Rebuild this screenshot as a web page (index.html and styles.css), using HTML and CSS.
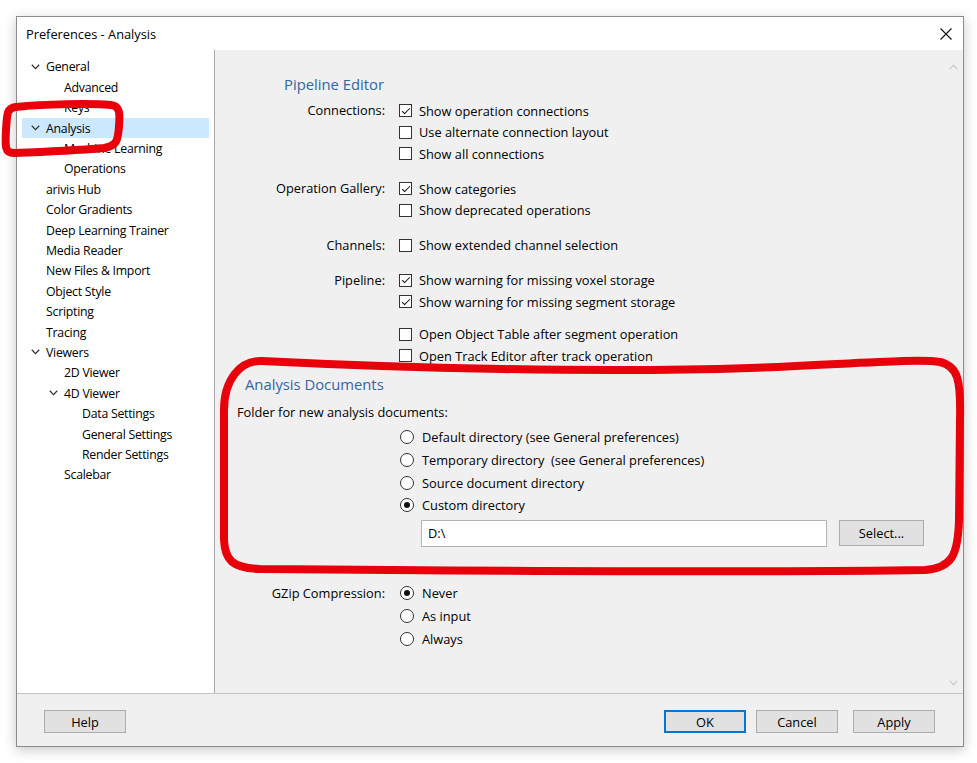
FILE: index.html
```html
<!DOCTYPE html>
<html>
<head>
  <meta name="viewport" content="width=device-width, initial-scale=1">
  <link rel="stylesheet" href="styles.css">
</head>
<body>

  <div class="window">
    <!-- Title bar -->
    <div class="titlebar">
      <span class="title">Preferences - Analysis</span>
      <span class="close">
        <svg width="12" height="12" viewBox="0 0 12 12"><path d="M0.5 0.5 L11.5 11.5 M11.5 0.5 L0.5 11.5" stroke="#111" stroke-width="1.1" fill="none"/></svg>
      </span>
    </div>

    <div class="main">
      <!-- Category tree -->
      <ul class="tree">
        <li class="l0"><span class="twisty"><svg width="9" height="6" viewBox="0 0 9 6"><path d="M0.8 0.8 L4.5 4.6 L8.2 0.8" stroke="#333" stroke-width="1.3" fill="none"/></svg></span>General</li>
        <li class="l1"><span class="twisty"></span>Advanced</li>
        <li class="l1"><span class="twisty"></span>Keys</li>
        <li class="l0 selected"><span class="twisty"><svg width="9" height="6" viewBox="0 0 9 6"><path d="M0.8 0.8 L4.5 4.6 L8.2 0.8" stroke="#333" stroke-width="1.3" fill="none"/></svg></span>Analysis</li>
        <li class="l1"><span class="twisty"></span>Machine Learning</li>
        <li class="l1"><span class="twisty"></span>Operations</li>
        <li class="l0"><span class="twisty"></span>arivis Hub</li>
        <li class="l0"><span class="twisty"></span>Color Gradients</li>
        <li class="l0"><span class="twisty"></span>Deep Learning Trainer</li>
        <li class="l0"><span class="twisty"></span>Media Reader</li>
        <li class="l0"><span class="twisty"></span>New Files &amp; Import</li>
        <li class="l0"><span class="twisty"></span>Object Style</li>
        <li class="l0"><span class="twisty"></span>Scripting</li>
        <li class="l0"><span class="twisty"></span>Tracing</li>
        <li class="l0"><span class="twisty"><svg width="9" height="6" viewBox="0 0 9 6"><path d="M0.8 0.8 L4.5 4.6 L8.2 0.8" stroke="#333" stroke-width="1.3" fill="none"/></svg></span>Viewers</li>
        <li class="l1"><span class="twisty"></span>2D Viewer</li>
        <li class="l1"><span class="twisty"><svg width="9" height="6" viewBox="0 0 9 6"><path d="M0.8 0.8 L4.5 4.6 L8.2 0.8" stroke="#333" stroke-width="1.3" fill="none"/></svg></span>4D Viewer</li>
        <li class="l2"><span class="twisty"></span>Data Settings</li>
        <li class="l2"><span class="twisty"></span>General Settings</li>
        <li class="l2"><span class="twisty"></span>Render Settings</li>
        <li class="l1"><span class="twisty"></span>Scalebar</li>
      </ul>

      <!-- Settings page -->
      <div class="content">
        <div class="page">
          <div class="section-title pipeline-title">Pipeline Editor</div>

          <div class="group">
            <div class="label">Connections:</div>
            <div class="opts">
              <div class="opt"><span class="check on"></span>Show operation connections</div>
              <div class="opt"><span class="check"></span>Use alternate connection layout</div>
              <div class="opt"><span class="check"></span>Show all connections</div>
            </div>
          </div>

          <div class="group">
            <div class="label">Operation Gallery:</div>
            <div class="opts">
              <div class="opt"><span class="check on"></span>Show categories</div>
              <div class="opt"><span class="check"></span>Show deprecated operations</div>
            </div>
          </div>

          <div class="group">
            <div class="label">Channels:</div>
            <div class="opts">
              <div class="opt"><span class="check"></span>Show extended channel selection</div>
            </div>
          </div>

          <div class="group">
            <div class="label">Pipeline:</div>
            <div class="opts">
              <div class="opt"><span class="check on"></span>Show warning for missing voxel storage</div>
              <div class="opt"><span class="check on"></span>Show warning for missing segment storage</div>
            </div>
          </div>

          <div class="group tight">
            <div class="label"></div>
            <div class="opts">
              <div class="opt"><span class="check"></span>Open Object Table after segment operation</div>
              <div class="opt"><span class="check"></span>Open Track Editor after track operation</div>
            </div>
          </div>

          <div class="section-title docs-title">Analysis Documents</div>
          <div class="folder-label">Folder for new analysis documents:</div>
          <div class="radios">
            <div class="ropt"><span class="radio"></span>Default directory (see General preferences)</div>
            <div class="ropt"><span class="radio"></span>Temporary directory&nbsp; (see General preferences)</div>
            <div class="ropt"><span class="radio"></span>Source document directory</div>
            <div class="ropt"><span class="radio on"></span>Custom directory</div>
          </div>
          <div class="path-row">
            <div class="path-input">D:\</div>
            <div class="btn select-btn">Select...</div>
          </div>

          <div class="group gzip">
            <div class="label">GZip Compression:</div>
            <div class="opts">
              <div class="ropt"><span class="radio on"></span>Never</div>
              <div class="ropt"><span class="radio"></span>As input</div>
              <div class="ropt"><span class="radio"></span>Always</div>
            </div>
          </div>
        </div>

        <div class="scrollbar">
          <svg width="9" height="6" viewBox="0 0 9 6"><path d="M0.8 5.2 L4.5 1.4 L8.2 5.2" stroke="#c4c4c4" stroke-width="1.1" fill="none"/></svg>
          <svg width="9" height="6" viewBox="0 0 9 6"><path d="M0.8 0.8 L4.5 4.6 L8.2 0.8" stroke="#c4c4c4" stroke-width="1.1" fill="none"/></svg>
        </div>
      </div>
    </div>

    <!-- Dialog buttons -->
    <div class="footer">
      <div class="btn">Help</div>
      <div class="spacer"></div>
      <div class="btn default">OK</div>
      <div class="btn">Cancel</div>
      <div class="btn apply">Apply</div>
    </div>
  </div>

  <!-- Hand-drawn red markings over the screenshot -->
  <svg class="marks" width="977" height="763" viewBox="0 0 977 763">
    <path d="M16 107 C 45 104 90 103 111 105 C 120 106 120 113 119 126 C 118 140 117 146 104 148 C 80 150 40 152 14 153 C 5 153 5 147 6 130 C 7 113 7 108 16 107 Z"
          fill="none" stroke="#e8000a" stroke-width="8" stroke-linejoin="round"/>
    <path d="M262 361 C 400 368 600 373 750 368 C 850 364 920 358 940 362 C 958 366 961 380 960 420 L 959 520 C 958 555 952 568 925 570 C 800 572 500 571 260 569 C 232 568 225 560 224 540 L 224 410 C 224 380 240 360 262 361 Z"
          fill="none" stroke="#e8000a" stroke-width="8" stroke-linejoin="round"/>
  </svg>

</body>
</html>
```

FILE: styles.css
```css
/* Base styling */
body {
  margin: 0;
  padding: 0;
  background: #fff;
  font-family: "Open Sans", Arial, sans-serif;
  font-size: 12.8px;
  color: #000;
  position: relative;
  width: 977px;
  height: 763px;
  overflow: hidden;
}
/* Dialog frame */
.window {
  margin: 16px 0 0 16px;
  width: 946px;
  height: 729px;
  border: 1px solid #8c8c8c;
  box-shadow: 0 3px 12px rgba(0,0,0,0.22);
  display: flex;
  flex-direction: column;
  background: #f0f0f0;
}
.titlebar {
  height: 33px;
  background: #fff;
  display: flex;
  align-items: center;
  padding-left: 9px;
  padding-right: 11px;
}
.title {
  flex: 1;
  font-size: 12.8px;
}
.close {
  display: flex;
  align-items: center;
}
.main {
  height: 643px;
  display: flex;
}
/* Tree on the left */
.tree {
  list-style: none;
  margin: 0;
  padding: 6.8px 0 0 0;
  width: 197px;
  background: #fff;
  border-right: 1px solid #a8a8a8;
  font-size: 12.3px;
  letter-spacing: -0.25px;
}
.tree li {
  height: 20.4px;
  margin: 0 5px;
  display: flex;
  align-items: center;
  white-space: nowrap;
}
.tree li.selected {
  background: #cce8ff;
}
.tree .twisty {
  width: 16px;
  display: flex;
  align-items: center;
  padding-left: 1px;
  box-sizing: border-box;
}
.tree .l0 { padding-left: 8px; }
.tree .l1 { padding-left: 26px; }
.tree .l2 { padding-left: 44px; }
/* Right side settings */
.content {
  flex: 1;
  display: flex;
  background: #f0f0f0;
}
.page {
  flex: 1;
  padding-top: 23.5px;
}
.scrollbar {
  width: 20px;
  display: flex;
  flex-direction: column;
  justify-content: space-between;
  align-items: center;
  padding: 14px 0 7px 0;
}
.section-title {
  font-size: 14.8px;
  line-height: 20px;
  color: #3367a0;
}
.pipeline-title {
  padding-left: 69px;
  margin-bottom: 6.5px;
}
.group {
  display: flex;
  margin-bottom: 13.5px;
}
.group.tight {
  margin-top: -2.5px;
  margin-bottom: 7.5px;
}
.label {
  width: 170px;
  text-align: right;
  line-height: 21.5px;
  white-space: nowrap;
}
.opts {
  margin-left: 14px;
}
.opt {
  height: 21.5px;
  display: flex;
  align-items: center;
  gap: 7px;
  white-space: nowrap;
}
/* Checkboxes */
.check {
  width: 13px;
  height: 13px;
  box-sizing: border-box;
  border: 1px solid #333;
  background: #fff;
  position: relative;
}
.check.on::after {
  content: "";
  position: absolute;
  left: 3.5px;
  top: 0.5px;
  width: 3px;
  height: 7px;
  border-right: 1.4px solid #111;
  border-bottom: 1.4px solid #111;
  transform: rotate(45deg);
}
/* Radio buttons */
.ropt {
  display: flex;
  align-items: center;
  gap: 8px;
  white-space: nowrap;
}
.radio {
  width: 14px;
  height: 14px;
  box-sizing: border-box;
  border: 1px solid #333;
  border-radius: 50%;
  background: #fff;
  display: flex;
  align-items: center;
  justify-content: center;
}
.radio.on::after {
  content: "";
  width: 6px;
  height: 6px;
  border-radius: 50%;
  background: #111;
}
.docs-title {
  padding-left: 30px;
}
.folder-label {
  padding-left: 22px;
  line-height: 20px;
  margin-top: 7.5px;
}
.radios {
  margin-left: 185px;
  margin-top: 4.5px;
}
.radios .ropt {
  height: 22.7px;
}
.path-row {
  display: flex;
  align-items: flex-start;
  gap: 12px;
  margin: 3px 0 0 206px;
}
.path-input {
  width: 406px;
  height: 27px;
  box-sizing: border-box;
  border: 1px solid #b4b4b4;
  background: #fff;
  padding-left: 6px;
  line-height: 25px;
}
.gzip {
  margin-top: 35px;
}
.gzip .opts {
  margin-left: 15px;
}
.gzip .label {
  line-height: 23px;
}
.gzip .ropt {
  height: 23px;
}
/* Push buttons */
.btn {
  width: 82px;
  height: 23px;
  box-sizing: border-box;
  border: 1px solid #adadad;
  background: #e1e1e1;
  display: flex;
  align-items: center;
  justify-content: center;
}
.select-btn {
  width: 85px;
  height: 26px;
}
.btn.default {
  border: 2px solid #0078d7;
}
.footer {
  flex: 1;
  border-top: 1px solid #c4c4c4;
  display: flex;
  align-items: flex-start;
  padding: 16px 28px 0 27px;
  gap: 10px;
}
.spacer {
  flex: 1;
}
.btn.apply {
  margin-left: 5px;
}
/* Red annotation overlay */
.marks {
  position: absolute;
  left: 0;
  top: 0;
  pointer-events: none;
}
```
